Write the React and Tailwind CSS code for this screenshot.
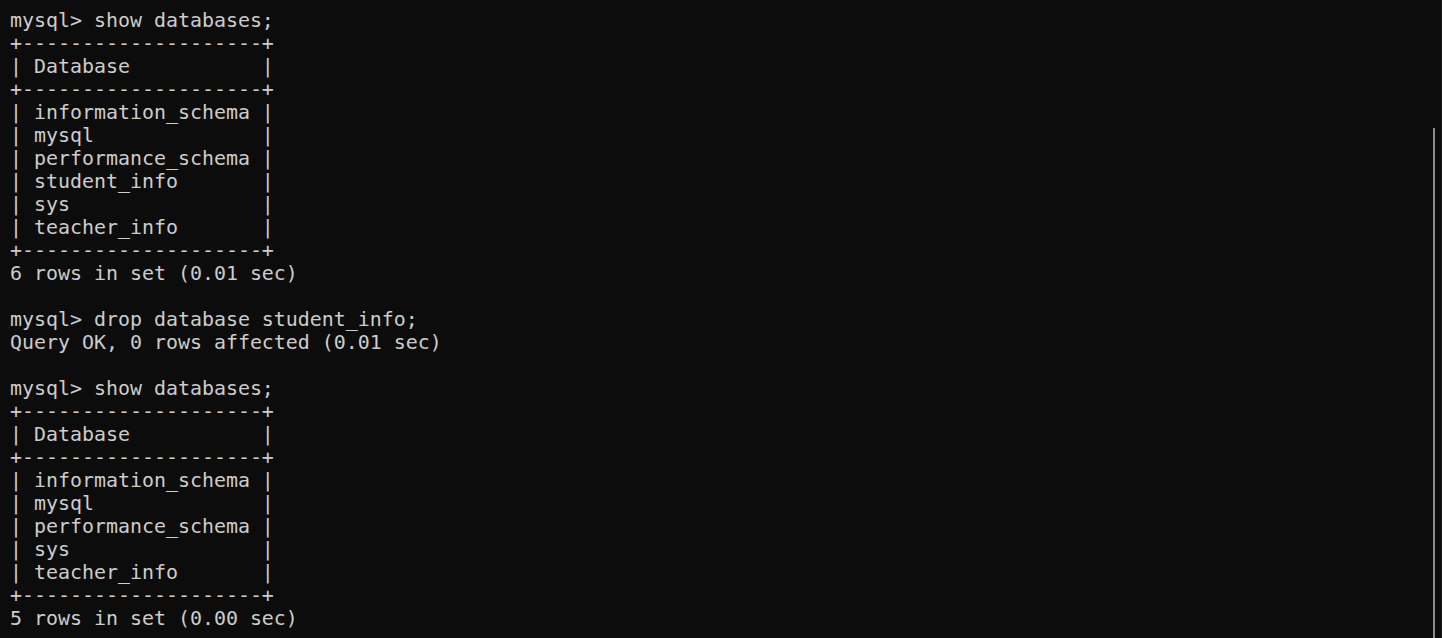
const lines = [
  "mysql> show databases;",
  "+--------------------+",
  "| Database           |",
  "+--------------------+",
  "| information_schema |",
  "| mysql              |",
  "| performance_schema |",
  "| student_info       |",
  "| sys                |",
  "| teacher_info       |",
  "+--------------------+",
  "6 rows in set (0.01 sec)",
  "",
  "mysql> drop database student_info;",
  "Query OK, 0 rows affected (0.01 sec)",
  "",
  "mysql> show databases;",
  "+--------------------+",
  "| Database           |",
  "+--------------------+",
  "| information_schema |",
  "| mysql              |",
  "| performance_schema |",
  "| sys                |",
  "| teacher_info       |",
  "+--------------------+",
  "5 rows in set (0.00 sec)",
];

export default function App() {
  return (
    <div className="relative h-[638px] w-[1442px] overflow-hidden bg-[#0c0c0c]">
      <pre className="m-0 pl-[10px] pt-[9px] font-['DejaVu_Sans_Mono',monospace] text-[19.93px] leading-[23px] text-[#cccccc]">
        {lines.map((l, i) => (
          <div key={i} className="h-[23px] whitespace-pre">{l}</div>
        ))}
      </pre>
      <div className="absolute right-[7px] top-[128px] h-[510px] w-[2px] bg-[#8b8b8b]" />
      <div className="absolute right-0 top-0 h-full w-[1px] bg-[#1e1e1e]" />
    </div>
  );
}
